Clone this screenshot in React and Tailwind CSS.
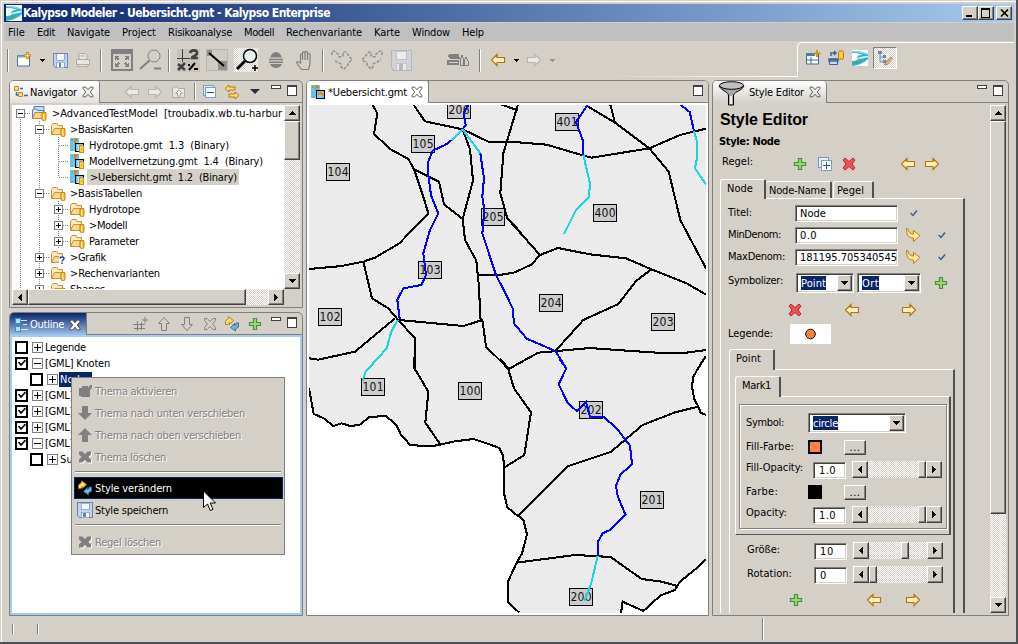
import React, { useLayoutEffect, useRef } from 'react';

const RAISED = 'bg-[#d4d0c8] border border-t-white border-l-white border-r-[#404040] border-b-[#404040] shadow-[inset_-1px_-1px_0_#808080] flex items-center justify-center shrink-0';
const SUNKEN = 'bg-white border border-t-[#808080] border-l-[#808080] border-r-white border-b-white shadow-[inset_1px_1px_0_#404040,inset_-1px_-1px_0_#d4d0c8] shrink-0';
const DITHER = 'bg-[repeating-conic-gradient(#ffffff_0_25%,#d4d0c8_0_50%)] bg-[length:2px_2px]';

/* Text run whose tracking is adjusted so that it takes exactly w pixels. */
function Fit({ w, className = '', children }) {
  const ref = useRef(null);
  useLayoutEffect(() => {
    const el = ref.current;
    el.style.letterSpacing = '0px';
    const natural = el.getBoundingClientRect().width;
    el.style.letterSpacing = (w - natural) / el.textContent.length + 'px';
  }, [w, children]);
  return <span ref={ref} className={'inline-block whitespace-pre shrink-0 leading-[15px] ' + className}>{children}</span>;
}

function I({ s = 16, className = '', crisp, children }) {
  return (
    <svg width={s} height={s} viewBox="0 0 16 16" className={'shrink-0 ' + className} shapeRendering={crisp ? 'crispEdges' : 'auto'} fill="none">
      {children}
    </svg>
  );
}

const Slot = ({ className, children }) => <div className={'flex h-full shrink-0 items-center justify-center ' + className}>{children}</div>;

/* ---------- icons ---------- */
const ArrowL = ({ fill = '#fff0b8', stroke = '#b8740c' }) => <I><path d="M1.500 8 7 2.500v3h7.500v5H7v3z" fill={fill} stroke={stroke} strokeWidth="1.200" /></I>;
const ArrowR = ({ fill = '#fff0b8', stroke = '#b8740c' }) => <I><path d="M14.500 8 9 2.500v3H1.500v5H9v3z" fill={fill} stroke={stroke} strokeWidth="1.200" /></I>;
const GL = () => <ArrowL fill="#eceae4" stroke="#b9b5ac" />;
const GR = () => <ArrowR fill="#eceae4" stroke="#b9b5ac" />;
const Plus = () => <I><path d="M6.500 2.500h3v4h4v3h-4v4h-3v-4h-4v-3h4z" fill="#a8d468" stroke="#3f9048" strokeWidth="1.200" /></I>;
const RedX = () => <I><path d="M2 4 4 2l4 3.500L12 2l2 2-3 4 3 4-2 2-4-3.500L4 14l-2-2 3-4z" fill="#ee5058" stroke="#c8202c" /></I>;
const Curve = () => <I><path d="M1.500 1.500c0 7 2 9.500 7 9.500v3.500l6.500-6-6.500-5v3.500c-3 0-5-1.500-5.500-5z" fill="#ffe690" stroke="#b8801c" /></I>;
const Check = () => <I s={8}><path d="M1 8l5 5 8-10" stroke="#3c5c98" strokeWidth="3" /></I>;
const Copy = () => (
  <I s={14} crisp><rect x="1" y="1" width="11" height="11" fill="#e6eef8" stroke="#6c8cbc" /><rect x="3.500" y="3.500" width="12" height="12" fill="#fff" stroke="#6c90c0" /><path d="M9.500 6v8M5.500 10h8" stroke="#28508c" strokeWidth="1.200" /></I>
);
const Swap = () => (
  <I><path d="M1.500 8.500V5l3-2.500V.800l5 3.700-4 3.800V6.500L4 8.500z" fill="#ffdc70" stroke="#b8780c" strokeWidth=".9" /><path d="M14.500 7v4l-3 2v2l-5-3.500 4-4v2l1.500-1V7z" fill="#78b4d4" stroke="#286c90" strokeWidth=".9" /></I>
);
const Floppy = ({ s, dark = '#6484b8', body = '#c4d4ec', face = '#f4f6f8' }) => (
  <I s={s} crisp><path d="M.5.5h15v15H2.500l-2-2z" fill={body} stroke={dark} /><path d="M4 1h8v6.500H4zM4 10h8v5.500H4z" fill={face} stroke={dark} strokeWidth=".6" /><path d="M6 11h3v4H6z" fill={dark} /></I>
);
const Tri = ({ c = '#000' }) => <svg width="7" height="4" viewBox="0 0 7 4" shapeRendering="crispEdges" className="shrink-0"><path d="M0 0h7L3.500 4z" fill={c} /></svg>;
const SmallTri = ({ c = '#000' }) => <svg width="5" height="3" viewBox="0 0 5 3" shapeRendering="crispEdges" className="shrink-0"><path d="M0 0h5L2.500 3z" fill={c} /></svg>;
const TriUp = () => <svg width="7" height="4" viewBox="0 0 7 4" shapeRendering="crispEdges"><path d="M0 4h7L3.500 0z" fill="#000" /></svg>;
const TriL = () => <svg width="4" height="7" viewBox="0 0 4 7" shapeRendering="crispEdges"><path d="M4 0v7L0 3.500z" fill="#000" /></svg>;
const TriR = () => <svg width="4" height="7" viewBox="0 0 4 7" shapeRendering="crispEdges"><path d="M0 0v7L4 3.500z" fill="#000" /></svg>;
const River = ({ s = 16 }) => (
  <I s={s}><path d="M0 0h16v16H0z" fill="#fff" /><path d="M0 1c5-.5 10 .5 16 3v2c-5 0-8 1-11 2.500C8 9 12 8.500 16 7v2c-3 3-8 6-16 7v-5c3 0 6-1 6-2C4 7.500 6 5 11 4.500 7 3 3 3 0 3z" fill="#28b4d8" /><path d="M1 14c3-3 7-4 10-4-2 2-6 4-10 4z" fill="#4ca864" /><path d="M0 1c5-.5 10 .5 16 3v1C10 3 5 2 0 2z" fill="#80dcf0" /></I>
);
const Cylinder = () => <g><rect x="11" y="7.500" width="4" height="8" rx="1.500" fill="#ffc838" stroke="#c07c10" /><path d="M12.500 9v5" stroke="#fff0b0" /></g>;
const Folder = ({ mark }) => (
  <I><path d="M1.500 13.500v-9l1.500-2h4l1 2h4.500v9z" fill="#fbe8b8" stroke="#c89038" /><path d="M1.500 13.500l3-6h10.500l-3 6z" fill="#fcd888" stroke="#c89038" />
    {mark ? <g><path d="M9 7h6v9H9z" fill="#fff" /><path d="M10 9.500c0-2 4-2 4 0 0 1.500-2 1.500-2 3m0 1v1.500" stroke="#1838b0" strokeWidth="1.500" /></g> : <Cylinder />}
  </I>
);
const ProjectIcon = () => <I><path d="M3 1.500h10v6H3z" fill="#c8dcf8" stroke="#5878c0" /><path d="M1.500 13.500V5l1-1h3l1 1.500h6v8z" fill="#e0e8f8" stroke="#5878c0" /><path d="M1.500 13.500l2.500-6h11l-2.500 6z" fill="#fcd480" stroke="#c08828" /><Cylinder /></I>;
const MapIcon = ({ cyl = true }) => (
  <I crisp><path d="M1 1h9v13H1z" fill="#5cc8fc" /><path d="M2 2h2v2H2zM5 1h3v1h1v2H7v2H5zM2 8h1v1H2zM2 12h2v1H2z" fill="#c88c28" /><rect x="6.500" y="6.500" width="8" height="8" fill="#78ccfc" stroke="#000" />{cyl ? <g><rect x="9" y="8" width="5" height="6" fill="#e8e0d8" /><rect x="10.500" y="8.500" width="4" height="6.500" fill="#ffc838" stroke="#d08c20" /></g> : <path d="M8 8h4v1h2v3h-2v-1H9z" fill="#e09020" />}</I>
);
const CloseX = ({ c = '#505050', fill = 'none' }) => (
  <I s={12}><path d="M1.500 1.500H5l3 3.500 3-3.500h3.500v2L11 8l3.500 4.500v2H11L8 11l-3 3.500H1.500v-2L5 8 1.500 3.500z" fill={fill} stroke={c} strokeWidth="1.200" /></I>
);
const MinBox = () => <div className="mt-[4px] h-[4px] w-[10px] shrink-0 self-start border border-[#404040] bg-white" />;
const MaxBox = () => <div className="mt-[4px] h-[11px] w-[10px] shrink-0 self-start border border-t-2 border-[#404040] bg-white" />;
const Sep = () => <div className="h-[23px] w-[2px] border-l border-[#808080] bg-white" />;
const DisX = () => <I><path d="M2 2.500h3.500L8 5l2.500-2.500H14v3L11.500 8l2.500 2.500v3h-3.500L8 11l-2.500 2.500H2v-3L4.500 8 2 5.500z" fill="#fff" transform="translate(1 1)" /><path d="M2 2.500h3.500L8 5l2.500-2.500H14v3L11.500 8l2.500 2.500v3h-3.500L8 11l-2.500 2.500H2v-3L4.500 8 2 5.500z" fill="#808080" /></I>;

/* ---------- title, menu and tool bars ---------- */
const MENU = [['File', 17], ['Edit', 18], ['Navigate', 43], ['Project', 34], ['Risikoanalyse', 64], ['Modell', 30], ['Rechenvariante', 76], ['Karte', 26], ['Window', 38], ['Help', 22]];

function TitleBar() {
  return (
    <div className="flex h-[18px] shrink-0 items-center bg-[linear-gradient(90deg,#0a246a,#a6caf0)] pl-[2px] pr-[2px]">
      <River />
      <Fit w={307} className="ml-[1px] text-[12px] font-bold text-white">Kalypso Modeler - Uebersicht.gmt - Kalypso Enterprise</Fit>
      <div className="ml-auto flex">
        <div className={RAISED + ' h-[14px] w-[16px]'}><svg width="10" height="9"><path d="M1 6h6v2H1z" fill="#000" /></svg></div>
        <div className={RAISED + ' h-[14px] w-[16px]'}><svg width="10" height="10" shapeRendering="crispEdges"><path d="M.5 1h8v8h-8z" fill="none" stroke="#000" /><path d="M0 0h9v2H0z" fill="#000" /></svg></div>
        <div className={RAISED + ' ml-[2px] h-[14px] w-[16px]'}><svg width="9" height="8"><path d="M1 .5l7 7M8 .5l-7 7" stroke="#000" strokeWidth="1.600" /></svg></div>
      </div>
    </div>
  );
}

function ToolBar() {
  return (
    <div className="flex h-[38px] shrink-0 items-center">
      <Slot className="w-[7px]"><Sep /></Slot>
      <Slot className="w-[25px]"><I><path d="M1.500 3.500h12v10.500h-12z" fill="#fdfdf4" stroke="#4878a8" /><path d="M1.500 3.500h8v2h-8z" fill="#78a4d8" /><path d="M11.500 0v7M8 3.500h7" stroke="#c89018" strokeWidth="2.600" /><path d="M11.500 1.500v4M9.500 3.500h4" stroke="#ffeca0" /></I></Slot>
      <Slot className="w-[13px]"><SmallTri /></Slot>
      <Slot className="w-[23px]"><Floppy s={15} /></Slot>
      <Slot className="w-[22px]"><I><path d="M4 7V1.500h6l2 2V7M1.500 7.500h13v5h-13zM3 12.500h10v2H3zM5.500 4h4" fill="#e8e6e0" stroke="#b0aca4" /></I></Slot>
      <Slot className="w-[13px]"><Sep /></Slot>
      <Slot className="w-[29px]">
        <svg width="22" height="22" shapeRendering="crispEdges"><path d="M0 0h22v22H0z" fill="#808080" /><path d="M2 5h18v15H2z" fill="#d4d0c8" /><path d="M4 7h5L4 11zM18 7h-5l5 4zM4 18h5l-5-4zM18 18h-5l5-4z" fill="#808080" /><path d="M6 9l2 2M16 9l-2 2M6 16l2-2M16 16l-2-2" stroke="#808080" strokeWidth="1.500" /></svg>
      </Slot>
      <Slot className="w-[28px]"><svg width="22" height="22"><circle cx="15" cy="7" r="6" fill="none" stroke="#808080" /><path d="M10.500 11.500 1 20M15 19.500h7" stroke="#808080" strokeWidth="2" /></svg></Slot>
      <Slot className="w-[10px]"><Sep /></Slot>
      <Slot className="w-[28px]">
        <svg width="23" height="23"><path d="M0 0h23v23H0z" fill="#c8c4bc" /><path d="M0 9.500h13M5.500 0v13" stroke="#404040" /><path d="M13 4c1-3.500 7-3.500 7 0s-5 3-5 5h6M1 15l7 6M8 14l-7 7" fill="none" stroke="#404040" strokeWidth="2.600" /><path d="M11 16h2M12 21l6-7M17 20h4" stroke="#000" strokeWidth="2" /></svg>
      </Slot>
      <Slot className="w-[30px]">
        <svg width="22" height="22"><path d="M.5.5h21v21H.5z" fill="#d0ccc4" stroke="#bcb8b0" /><path d="M12 12h9v9h-9zM1 1h5v6H1z" fill="#909090" /><path d="M3 4l15 13" stroke="#000" strokeWidth="2" /></svg>
      </Slot>
      <Slot className="w-[28px]">
        <div className={DITHER + ' h-[24px] w-[24px]'}>
          <svg width="24" height="24"><circle cx="16" cy="8" r="6.500" fill="#e8f0f0" stroke="#000" strokeWidth="1.500" /><path d="M11 13l-8 8" stroke="#000" strokeWidth="3" /><path d="M21 17v6M18 20h6" stroke="#000" strokeWidth="1.500" /></svg>
        </div>
      </Slot>
      <Slot className="w-[32px]"><svg width="16" height="20"><path d="M2 7.500c1-3 3-5.500 6-5.500s5 2.500 6 5.500zM1 8.800h14v1.500H1zM1 11.500h14V13H1zM2 14c1 2 3 4 6 4s5-2 6-4z" fill="#808080" /></svg></Slot>
      <Slot className="w-[26px]"><svg width="20" height="21"><path d="M6.500 19.500 1.500 13l1-1.500 3 1.500V4.500c1-1 2 0 2 1V10 2.500c1-1 2.500-1 2.500.5V10 2c1-1 2.500-.5 2.500 1V10 4c1-1 2.500-.5 2.500 1v9l-1.500 5.500z" fill="#d4d0c8" stroke="#808080" strokeWidth="1.200" /></svg></Slot>
      <Slot className="w-[10px]"><Sep /></Slot>
      <Slot className="w-[28px]"><svg width="22" height="22"><path d="M1 6V2h2l4 3 1 3 4-1V3h3l6 8-4 3v2l-4 4-3-2v-3l-6-3" fill="none" stroke="#808080" strokeWidth="1.200" strokeDasharray="3 1.500" /></svg></Slot>
      <Slot className="w-[31px]"><svg width="22" height="22"><path d="M21 6V2h-2l-4 3-1 3-4-1V3H8L1 11l5 3v2l4 4 2-2v-3l6-3 2-2" fill="none" stroke="#808080" strokeWidth="1.200" strokeDasharray="3 1.500" /></svg></Slot>
      <Slot className="w-[28px]"><Floppy s={21} dark="#b8b8bc" body="#d0d4d8" face="#ececea" /></Slot>
      <Slot className="ml-[29px] w-[28px]"><svg width="22" height="14" shapeRendering="crispEdges"><path d="M2 1h10v3h1v2H3L1 4zM0 7h12v5H0z" fill="#808080" /><path d="M2 9.500h9" stroke="#d4d0c8" /><path d="M13.500 12V6l1.500-4 1.500 4v6zM17.500 12V7L19 4l2 4v4z" fill="none" stroke="#808080" /></svg></Slot>
      <Slot className="w-[15px]"><Sep /></Slot>
      <Slot className="w-[22px]"><ArrowL /></Slot>
      <Slot className="w-[14px]"><SmallTri /></Slot>
      <Slot className="w-[22px]"><GR /></Slot>
      <Slot className="w-[14px]"><SmallTri c="#909090" /></Slot>
      <div className="ml-[37px] h-[36px] w-[201px] self-start bg-[linear-gradient(90deg,#d4d0c8,#ffffff)] bg-[length:100%_1px] bg-bottom bg-no-repeat" />
      <div className="mt-[1px] flex h-[35px] flex-1 items-center self-start rounded-tl-[5px] border-l border-t border-white pb-[4px] pl-[7px]">
        <Slot className="w-[16px]"><I><path d="M1.500 3.500h12v10.500h-12z" fill="#fcfcf4" stroke="#4068a0" /><path d="M1 3h9v3H1z" fill="#4878b8" /><path d="M6 7v7M1 10h12" stroke="#4068a0" /><path d="M12 0v7M8.500 3.500h7" stroke="#c89820" strokeWidth="2" /></I></Slot>
        <Slot className="ml-[5px] w-[20px]"><I><path d="M1.500 9.500h8v5h-8z" fill="#c8dcf4" stroke="#3860a0" /><path d="M1 9h9v2H1zM3 6V3h4M6 1l2 2-2 2" stroke="#3860a0" strokeWidth="1.400" /><rect x="10.500" y="1" width="5" height="8" rx="1.500" fill="#ffd040" stroke="#b87808" /></I></Slot>
        <Slot className="ml-[4px] w-[20px]"><River /></Slot>
        <div className={DITHER + ' ml-[3px] flex h-[22px] w-[24px] items-center justify-center border border-b-white border-r-white border-l-[#808080] border-t-[#808080]'}>
          <I><path d="M1 1h4v3H1zM6 5h3v3H6zM6 10h3v3H6z" fill="#6888c0" /><path d="M3 4v8h3M3 7h3" stroke="#6888c0" /><path d="M8 13l6-6 1.500 1.500-5 6-3 .5z" fill="#e0b070" stroke="#906030" strokeWidth=".6" /></I>
        </div>
      </div>
    </div>
  );
}

/* ---------- scroll bars ---------- */
function VScroll({ thumb, className }) {
  return (
    <div className={'flex w-[16px] shrink-0 flex-col ' + DITHER + ' ' + className}>
      <div className={RAISED + ' h-[16px] w-[16px]'}><TriUp /></div>
      <div className={RAISED + ' w-[16px] ' + thumb} />
      <div className={RAISED + ' mt-auto h-[16px] w-[16px]'}><Tri /></div>
    </div>
  );
}
function Slider({ offset = 'ml-auto' }) {
  return (
    <div className={'flex h-[17px] w-[90px] shrink-0 ' + DITHER}>
      <div className={RAISED + ' h-[17px] w-[16px]'}><TriL /></div>
      <div className="flex flex-1"><div className={RAISED + ' h-[17px] w-[8px] ' + offset} /></div>
      <div className={RAISED + ' h-[17px] w-[16px]'}><TriR /></div>
    </div>
  );
}

/* ---------- navigator ---------- */
/* One 19x16 cell of the tree guides: v through line, T branch, L last branch, + and - boxes. */
function Guide({ kind }) {
  const dash = { stroke: '#808080', strokeDasharray: '1 1' };
  const box = kind === '+' || kind === '-' || kind === 'r';
  return (
    <svg width="19" height="16" shapeRendering="crispEdges" className="shrink-0">
      {kind !== 'r' && <path d={kind === 'L' ? 'M9.500 0v8' : 'M9.500 0v16'} {...dash} />}
      {kind === 'r' && <path d="M9.500 8v8" {...dash} />}
      {kind !== 'v' && <path d="M10 8.500h9" {...dash} />}
      {box && <path d="M5.500 4.500h8v8h-8z" fill="#fff" stroke="#808080" />}
      {box && <path d={kind === '+' ? 'M7 8.500h5M9.500 6v5' : 'M7 8.500h5'} stroke="#000" />}
    </svg>
  );
}
const TREE = [
  ['r', 'p', '>AdvancedTestModel  [troubadix.wb.tu-harbur', 230],
  ['v-', 'f', '>BasisKarten', 63],
  ['vvT', 'm', 'Hydrotope.gmt  1.3  (Binary)', 140],
  ['vvT', 'm', 'Modellvernetzung.gmt  1.4  (Binary)', 174],
  ['vvL', 'm', '>Uebersicht.gmt  1.2  (Binary)', 147],
  ['v-', 'f', '>BasisTabellen', 72],
  ['vv+', 'f', 'Hydrotope', 51],
  ['vv+', 'f', '>Modell', 38],
  ['vv+', 'f', 'Parameter', 50],
  ['v+', 'q', '>Grafik', 36],
  ['v+', 'f', '>Rechenvarianten', 90],
  ['v+', 'f', 'Shapes', 35],
];

function Navigator() {
  return (
    <section className="flex h-[228px] flex-col rounded-t-[5px] border border-[#808080]">
      <div className="flex h-[22px] shrink-0">
        <div className="flex w-[90px] items-center rounded-tl-[4px] rounded-tr-[2px] border-r border-[#808080] bg-[linear-gradient(#fff,#e4e1dc)] pl-[3px]">
          <I><path d="M1.500 2.500h4v4h-4zM5.500 8.500h4v4h-4z" fill="#ffd880" stroke="#c08828" /><path d="M7 4.500h3M3.500 8v3H5M11 11.500h4" stroke="#3868a8" strokeWidth="1.500" /></I>
          <Fit w={47} className="ml-[1px]">Navigator</Fit>
          <span className="ml-[5px]"><CloseX /></span>
        </div>
        <div className="flex flex-1 items-center border-b border-[#808080] pl-[24px]">
          <GL /><span className="ml-[7px]"><GR /></span>
          <span className="ml-[8px]"><I><path d="M1.500 13.500V4l1-1h4l1 1.500h6v9z" fill="#e8e6e0" stroke="#b0aca4" /><path d="M8 6l3.500 3.500h-2V12h-3V9.500h-2z" fill="#fff" stroke="#a8a49c" /></I></span>
          <div className="ml-[7px] h-[17px] w-[2px] border-r border-white bg-[#808080]" />
          <span className="ml-[6px]"><I crisp><path d="M1.500 1.500h10v10h-10z" fill="#dce8f8" stroke="#78a0d0" /><path d="M3.500 3.500h10v10h-10z" fill="#fff" stroke="#78a0d0" /><path d="M5 8.500h7" stroke="#284c88" strokeWidth="1.500" /></I></span>
          <span className="ml-[6px]"><I><path d="M1 4.500 5 1v2h6v3H5v2zM15 11.500 11 8v2H5v3h6v2z" fill="#ffdc78" stroke="#b8780c" /></I></span>
          <span className="ml-[10px]"><svg width="10" height="5"><path d="M0 0h10L5 5z" fill="#302850" /></svg></span>
          <span className="ml-[11px] self-start"><MinBox /></span>
          <span className="ml-[6px] self-start"><MaxBox /></span>
        </div>
      </div>
      <div className="mx-[2px] mb-[2px] mt-[2px] flex flex-1 flex-col overflow-hidden">
        <div className="flex h-[184px] shrink-0">
          <div className="w-[272px] overflow-hidden bg-white">
            {TREE.map(([guides, icon, text, w], i) => (
              <div key={i} className="-ml-px flex h-[16px] items-center">
                {guides.split('').map((g, j) => <Guide key={j} kind={g} />)}
                <span className="ml-[1px] shrink-0">{icon === 'p' ? <ProjectIcon /> : icon === 'm' ? <MapIcon /> : <Folder mark={icon === 'q'} />}</span>
                <div className={(i === 4 ? 'bg-[#d4d0c8] pr-[2px] ml-[2px] pl-[3px]' : i === 0 ? 'ml-[5px]' : 'ml-[4px]') + ' flex h-[16px] shrink-0 items-center'}><Fit w={w}>{text}</Fit></div>
              </div>
            ))}
          </div>
          <VScroll className="h-[184px]" thumb="h-[39px]" />
        </div>
        <div className="flex h-[16px] shrink-0">
          <div className={'flex h-[16px] w-[272px] ' + DITHER}>
            <div className={RAISED + ' h-[16px] w-[16px]'}><TriL /></div>
            <div className={RAISED + ' h-[16px] w-[218px]'} />
            <div className={RAISED + ' ml-auto h-[16px] w-[16px]'}><TriR /></div>
          </div>
        </div>
      </div>
    </section>
  );
}

/* ---------- outline ---------- */
const OUTLINE = [
  [0, false, '+', 'Legende', 41], [0, true, '-', '[GML] Knoten', 65], [1, false, '+', 'Node', 26],
  [0, true, '+', '[GML]', 28], [0, true, '+', '[GML]', 28], [0, true, '+', '[GML]', 28], [0, true, '-', '[GML]', 28], [1, false, '+', 'Su', 13],
];

function Outline() {
  return (
    <section className="mt-[4px] flex h-[304px] flex-col rounded-t-[5px] border border-[#808080]">
      <div className="flex h-[22px] shrink-0">
        <div className="-mb-px flex w-[76px] items-center rounded-tl-[4px] bg-[linear-gradient(#0a246a,#a6caf0)] pl-[4px] text-white">
          <I crisp><path d="M1 1h5v5H1zM1 9h5v5H1z" fill="#a8e0f8" stroke="#3890d0" /><path d="M7 3.500h6M9 7.500h4M7 12.500h7" stroke="#d0e8fc" /></I>
          <Fit w={34}>Outline</Fit>
          <span className="ml-[5px]"><CloseX c="#404040" fill="#fff" /></span>
        </div>
        <div className="flex flex-1 items-center border-b border-l border-[#808080] pl-[46px]">
          <I><path d="M4.500 5v10M8.500 6v8M0 8.500h12M1 12.500h11M12 1v6M9 4h6" stroke="#808080" strokeWidth="1.100" /></I>
          <span className="ml-[7px]"><I><path d="M8 1.500l5.500 6h-3v7h-5v-7h-3z" stroke="#808080" /></I></span>
          <span className="ml-[7px]"><I><path d="M8 14.500l5.500-6h-3v-7h-5v7h-3z" stroke="#808080" /></I></span>
          <span className="ml-[7px]"><I><path d="M2.500 2.500H5l3 3 3-3h2.500v2L10.500 8l3 3.500v2H11l-3-3-3 3H2.500v-2l3-3.500-3-3.500z" stroke="#808080" /></I></span>
          <span className="ml-[6px]"><Swap /></span>
          <span className="ml-[7px]"><Plus /></span>
          <span className="ml-[8px] self-start"><MinBox /></span>
          <span className="ml-[6px] self-start"><MaxBox /></span>
        </div>
      </div>
      <div className="flex-1 overflow-hidden border-2 border-[#a6caf0] bg-white pl-[3px] pt-[2px]">
        {OUTLINE.map(([depth, on, sign, text, w], i) => (
          <div key={i} className={'flex h-[16px] items-center ' + (depth ? 'pl-[15px]' : '')}>
            <div className="flex h-[13px] w-[13px] shrink-0 items-center justify-center border-2 border-black">{on && <svg width="8" height="8"><path d="M.5 3l2.500 3L7.500 1" fill="none" stroke="#000" strokeWidth="1.800" /></svg>}</div>
            <svg width="11" height="11" shapeRendering="crispEdges" className="ml-[4px] shrink-0"><path d="M.5.5h10v10H.5z" fill="#fff" stroke="#808080" /><path d={sign === '+' ? 'M2 5.500h7M5.500 2v7' : 'M2 5.500h7'} stroke="#000" /></svg>
            <div className={'ml-[1px] flex h-[15px] items-center pl-[1px] ' + (i === 2 ? 'w-[33px] bg-[#0a246a] text-white' : '')}><Fit w={w}>{text}</Fit></div>
          </div>
        ))}
      </div>
    </section>
  );
}

/* ---------- context menu ---------- */
const DIS = 'text-[#808080] [text-shadow:1px_1px_0_#fff]';
function Item({ icon, w, children, className = DIS }) {
  return <div className={'flex h-[22px] shrink-0 items-center ' + className}><span className="ml-[3px] mr-[2px] shrink-0">{icon}</span><Fit w={w}>{children}</Fit></div>;
}
const Rule = ({ className }) => <div className={'mx-[1px] h-[2px] shrink-0 border-b border-white bg-[#808080] ' + className} />;

function ContextMenu() {
  return (
    <div className="absolute left-[71px] top-[377px] flex h-[178px] w-[214px] flex-col border border-[#808080] bg-[#d4d0c8] px-[2px] pt-[2px]">
      <Item w={82} icon={<I><path d="M2 5h3V3h6v2l2-3h2v3l-2 2v7H4v-1H2z" fill="#808080" /></I>}>Thema aktivieren</Item>
      <Item w={150} icon={<I><path d="M5 1h6v7h4l-7 7-7-7h4z" fill="#808080" /></I>}>Thema nach unten verschieben</Item>
      <Item w={146} icon={<I><path d="M5 15h6V8h4L8 1 1 8h4z" fill="#808080" /></I>}>Thema nach oben verschieben</Item>
      <Item w={71} icon={<DisX />}>Thema löschen</Item>
      <Rule className="mt-[3px]" />
      <Item w={77} className="-mr-px mt-[4px] border border-[#0a246a] bg-black text-white [&>span:first-child]:ml-[2px]!" icon={<Swap />}>Style verändern</Item>
      <Item w={73} className="text-black" icon={<Floppy s={16} />}>Style speichern</Item>
      <Rule className="mt-[3px]" />
      <Item w={66} className={'mt-[5px] ' + DIS} icon={<DisX />}>Regel löschen</Item>
    </div>
  );
}

/* ---------- map ---------- */
/* Lines are kept in third-pixel units, one group for each quadrant of the map. */
const QUADS = [
  { t: 'translate(300 100) scale(.33333)',
    b: ['215,10 232,40 222,102 272,148 325,177 342,208 417,245 432,313 488,357', '342,208 370,290 385,340 298,430 225,473 190,485 125,498 27,507', '190,485 216,595 265,625 292,657', '338,10 375,64 488,88 565,125 660,125', '488,88 510,148 519,242 488,357 495,420 529,482 537,560 541,655 548,665 558,740 626,807 665,785', '655,10 610,160 601,280 622,355 665,400', '537,525 600,525 645,517 660,510', '298,660 490,678 548,660', '285,655 165,755 55,779 27,775', '292,657 345,715 344,812', '605,14 655,32'],
    r: ['505,14 491,40 497,75 488,88', '455,120 437,134 398,152 385,185 385,225 393,285 415,340 390,390 370,460 378,525 364,555 310,565 292,600 299,657', '541,160 552,235 547,290 553,330 547,400 588,525 638,625 642,670 660,692'],
    c: ['488,88 455,120', '488,88 541,160', '293,660 274,695 260,745 200,812'] },
  { t: 'translate(500 100) scale(.33333)',
    b: ['5,14 53,30', '0,125 55,127 140,134 248,166 275,173 448,145 540,105 618,86', '258,16 345,68 448,145 506,215 541,360 618,505', '331,14 345,68', '22,355 120,465 95,493 45,517 0,525', '120,465 173,444 270,463 378,475 454,508 560,550 618,584', '454,508 408,543 355,612 250,660 166,753', '0,775 26,807 115,758 270,744 350,750 470,758 560,758 618,750', '618,768 590,812'],
    r: ['262,16 228,66 248,120 249,165', '541,14 569,36 582,93', '0,547 38,625 42,670 80,716 166,753 199,805'],
    c: ['250,165 270,250 267,290 228,330 192,402', '582,93 591,125 590,180 585,205 618,253'] },
  { t: 'translate(300 360) scale(.33333)',
    b: ['27,85 41,162 70,174 100,198 125,190 150,198 178,195 208,171 258,168 290,196 303,225 330,254 365,258 405,257 465,244 520,237 560,250 598,264 608,285 612,310 612,400 622,442 656,470', '342,-10 342,22 385,95 376,188 420,252'],
    r: [], c: ['228,0 197,35 188,62'] },
  { t: 'translate(500 360) scale(.33333)',
    b: ['0,0 25,28 42,85 93,157 73,285 12,323', '25,28 78,-2', '56,467 205,318 332,276 428,195 525,157 595,140', '56,467 70,480 81,523 66,580 50,608 24,665 24,727 58,758', '50,608 225,585 332,591 425,657 485,665 532,678', '618,-12 600,15 580,50 576,80 583,118 595,140 602,158 618,165', '618,598 598,618 540,665 525,690 482,706 430,753 368,725 363,758'],
    r: ['180,0 199,25 176,73 203,128 230,153 258,126 270,171 311,171 350,205 390,257 396,313 362,343 348,378 353,408 376,463 330,510 308,520 294,545 293,588'],
    c: ['293,588 275,665 254,722'] },
];
const LABELS = [['206', 447, 101], ['105', 411, 135], ['104', 326, 163], ['205', 481, 208], ['103', 418, 261], ['102', 318, 308], ['401', 555, 113], ['400', 593, 204], ['204', 539, 294], ['203', 651, 313], ['101', 361, 378], ['100', 458, 382], ['202', 579, 401], ['201', 640, 491], ['200', 569, 588]];

function RiverMap() {
  return (
    <svg width="397" height="508" viewBox="309 105 397 508" className="block">
      <path d="M309 105h397v508H309z" fill="#ebebeb" />
      <g fill="#fff">
        <polygon transform={QUADS[2].t} points="27,85 41,162 70,174 100,198 125,190 150,198 178,195 208,171 258,168 290,196 303,225 330,254 365,258 405,257 465,244 520,237 560,250 598,264 608,285 612,310 612,400 622,442 656,467 670,480 681,523 666,580 650,608 624,665 624,727 658,758 658,762 27,762" />
        <polygon transform={QUADS[3].t} points="618,-12 600,15 580,50 576,80 583,118 595,140 602,158 618,165" />
        <polygon transform={QUADS[3].t} points="618,598 598,618 540,665 525,690 482,706 430,753 368,725 363,762 618,762" />
      </g>
      <g shapeRendering="crispEdges" fill="none" strokeWidth="6.200" stroke="#000">
        {QUADS.map((q, i) => <g key={i} transform={q.t}>{q.b.map((p) => <polyline key={p} points={p} />)}</g>)}
      </g>
      {LABELS.map(([t, x, y]) => (
        <g key={t + y}>
          <rect x={x + 0.5} y={y + 0.5} width="23" height="17" fill="#ccc" stroke="#000" />
          <text x={x + 1.5} y={y + 13} textLength="21" fontSize="12" fill="#111">{t}</text>
        </g>
      ))}
      <g shapeRendering="crispEdges" fill="none" strokeWidth="6.200">
        {QUADS.map((q, i) => (
          <g key={i} transform={q.t}>
            {q.r.map((p) => <polyline key={p} points={p} stroke="#0000ff" />)}
            {q.c.map((p) => <polyline key={p} points={p} stroke="#1cd4e0" />)}
          </g>
        ))}
      </g>
    </svg>
  );
}

function Editor() {
  return (
    <section className="ml-[3px] flex w-[403px] shrink-0 flex-col rounded-t-[5px] border border-[#808080] bg-white">
      <div className="flex h-[22px] shrink-0 rounded-t-[4px] bg-[#d4d0c8]">
        <div className="flex w-[121px] items-center rounded-t-[4px] bg-white pl-[3px]">
          <MapIcon cyl={false} /><Fit w={79} className="ml-[2px]">*Uebersicht.gmt</Fit><span className="ml-[4px]"><CloseX /></span>
        </div>
        <div className="flex flex-1 justify-end border-b border-l border-[#808080] pr-[5px]"><MaxBox /></div>
      </div>
      <div className="pl-[2px] pt-[2px]"><RiverMap /></div>
    </section>
  );
}

/* ---------- style editor ---------- */
const Label = ({ w, slot, children }) => <div className={'shrink-0 ' + slot}><Fit w={w}>{children}</Fit></div>;
const Field = ({ className, w, children }) => <div className={SUNKEN + ' flex items-center overflow-hidden ' + className}><Fit w={w}>{children}</Fit></div>;
const Combo = ({ className, w, children }) => (
  <div className={SUNKEN + ' flex h-[20px] items-center p-[1px] ' + className}>
    <span className="ml-[3px] flex h-[14px] items-center bg-[#0a246a] text-white"><Fit w={w}>{children}</Fit></span>
    <div className={RAISED + ' ml-auto h-[16px] w-[15px]'}><Tri /></div>
  </div>
);
const Dots = () => <div className={RAISED + ' ml-[22px] h-[15px] w-[22px]'}><Fit w={11}>...</Fit></div>;
const TabHead = ({ className, children }) => <div className={'relative flex rounded-tl-[3px] rounded-tr-[2px] border-l border-t border-r-2 border-l-white border-t-white border-r-[#505050] bg-[#d4d0c8] ' + className}>{children}</div>;

function StyleEditor() {
  return (
    <section className="ml-[3px] flex w-[297px] shrink-0 flex-col rounded-t-[5px] border border-[#808080]">
      <div className="flex h-[22px] shrink-0">
        <div className="flex w-[114px] items-center rounded-t-[4px] border-r border-[#808080] bg-[linear-gradient(#fff,#d4d0c8)] pl-[5px]">
          <svg width="27" height="25" className="-mb-[3px] shrink-0"><path d="M1 5c3 5 8 5 9.500 9v10h5V14c2-4 8-4 10.500-9z" fill="#a8a8a8" stroke="#000" /><ellipse cx="13.500" cy="4.500" rx="12" ry="3.800" fill="#c0c0c0" stroke="#000" /><path d="M13 15v8" stroke="#f0f0f0" strokeWidth="2" /></svg>
          <Fit w={55} className="ml-[4px]">Style Editor</Fit><span className="ml-[5px]"><CloseX /></span>
        </div>
        <div className="flex flex-1 justify-end border-b border-[#808080] pr-[5px]"><MinBox /><span className="w-[6px]" /><MaxBox /></div>
      </div>
      <div className="flex h-[510px]">
        <div className="flex w-[277px] flex-col pl-[7px]">
          <div className="flex h-[32px] items-center"><Fit w={88} className="font-['Liberation_Sans',sans-serif] text-[16px] font-bold">Style Editor</Fit></div>
          <div className="flex h-[13px] items-center"><Fit w={61} className="-ml-px font-bold">Style: Node</Fit></div>
          <div className="flex h-[31px] items-center pl-[2px]">
            <Label w={31} slot="w-[70px] -mt-[3px]">Regel:</Label>
            <Plus /><span className="ml-[10px]"><Copy /></span><span className="ml-[9px]"><RedX /></span><span className="ml-[43px]"><ArrowL /></span><span className="ml-[8px]"><ArrowR /></span>
          </div>
          <div className="flex h-[19px] items-end">
            <TabHead className="z-10 -mb-px h-[20px] w-[46px] pl-[6px] pt-[1px]"><Fit w={26}>Node</Fit></TabHead>
            <TabHead className="h-[17px] w-[66px] border-l-0 pl-[3px] pt-px"><Fit w={57}>Node-Name</Fit></TabHead>
            <TabHead className="ml-[1px] h-[17px] w-[41px] pl-[3px] pt-px"><Fit w={27}>Pegel</Fit></TabHead>
          </div>
          <div className="flex w-[245px] flex-1 flex-col border-l border-r-2 border-t border-l-white border-r-[#505050] border-t-white pl-[7px] pt-[6px]">
            <div className="flex h-[22px] items-start"><Label w={24} slot="w-[67px]">Titel:</Label><Field w={26} className="h-[17px] w-[103px] pl-[4px]">Node</Field><span className="ml-[12px] mt-[4px]"><Check /></span></div>
            <div className="flex h-[22px] items-start"><Label w={53} slot="w-[67px]">MinDenom:</Label><Field w={17} className="h-[17px] w-[103px] pl-[4px]">0.0</Field><span className="ml-[7px]"><Curve /></span><span className="ml-[17px] mt-[4px]"><Check /></span></div>
            <div className="flex h-[22px] items-start"><Label w={57} slot="w-[67px]">MaxDenom:</Label><Field w={97} className="h-[17px] w-[103px] pl-[4px]">181195.705340545</Field><span className="ml-[7px]"><Curve /></span><span className="ml-[17px] mt-[4px]"><Check /></span></div>
            <div className="mt-[2px] flex h-[20px] items-start"><Label w={55} slot="w-[68px]">Symbolizer:</Label><Combo w={25} className="w-[58px]">Point</Combo><Combo w={17} className="ml-[3px] w-[64px]">Ort</Combo><span className="ml-[12px] mt-[2px]"><Plus /></span></div>
            <div className="mt-[9px] flex h-[16px] pl-[59px]"><RedX /><span className="ml-[41px]"><ArrowL /></span><span className="ml-[41px]"><ArrowR /></span></div>
            <div className="mt-[6px] flex h-[20px] items-center"><Label w={45} slot="w-[62px]">Legende:</Label><div className="flex h-[20px] w-[41px] items-center justify-center bg-white"><svg width="12" height="12"><circle cx="5.500" cy="6" r="4.800" fill="#ff8040" stroke="#000" /></svg></div></div>
            <TabHead className="z-10 -mb-px ml-[1px] mt-[5px] h-[21px] w-[46px] shrink-0 pl-[6px] pt-px"><Fit w={25}>Point</Fit></TabHead>
            <div className="ml-[1px] flex w-[226px] flex-1 flex-col border-l border-r-2 border-t border-l-white border-r-[#505050] border-t-white pl-[5px] pt-[6px]">
              <TabHead className="z-10 -mb-px h-[21px] w-[46px] shrink-0 pl-[6px] pt-px"><Fit w={29}>Mark1</Fit></TabHead>
              <div className="h-[139px] w-[216px] shrink-0 border border-r-2 border-b-[#505050] border-l-white border-r-[#505050] border-t-white pl-[3px] pt-[7px]">
                <div className="h-[125px] w-[208px] border border-[#808080] pl-[6px] pt-[8px] shadow-[inset_1px_1px_0_#fff,1px_1px_0_#fff]">
                  <div className="flex h-[26px] items-start"><Label w={38} slot="w-[62px] mt-[2px]">Symbol:</Label><Combo w={25} className="w-[98px]">circle</Combo></div>
                  <div className="flex h-[22px] items-start pt-[1px]"><Label w={48} slot="w-[62px] -mt-[1px]">Fill-Farbe:</Label><div className="h-[14px] w-[14px] border-2 border-black bg-[#ff8040]" /><Dots /></div>
                  <div className="flex h-[23px] items-start"><Label w={57} slot="w-[67px] -mt-[1px]">Fill-Opacity:</Label><Field w={17} className="mt-[1px] h-[17px] w-[33px] pl-[5px]">1.0</Field><span className="ml-[6px]"><Slider /></span></div>
                  <div className="flex h-[22px] items-start pt-[1px]"><Label w={32} slot="w-[62px] -mt-[1px]">Farbe:</Label><div className="h-[14px] w-[14px] bg-black" /><Dots /></div>
                  <div className="flex h-[20px] items-start"><Label w={41} slot="w-[67px] -mt-[1px]">Opacity:</Label><Field w={17} className="mt-[1px] h-[17px] w-[33px] pl-[5px]">1.0</Field><span className="ml-[6px]"><Slider /></span></div>
                </div>
              </div>
              <div className="mt-[7px] flex h-[24px] items-start pl-[12px]"><Label w={33} slot="w-[67px]">Größe:</Label><Field w={14} className="mt-[1px] h-[17px] w-[33px] pl-[5px]">10</Field><span className="ml-[6px]"><Slider offset="ml-[32px]" /></span></div>
              <div className="flex h-[24px] items-start pl-[12px]"><Label w={45} slot="w-[67px]">Rotation:</Label><Field w={7} className="mt-[1px] h-[17px] w-[33px] pl-[5px]">0</Field><span className="ml-[6px]"><Slider offset="ml-0" /></span></div>
              <div className="mt-[2px] flex h-[16px] pl-[53px]"><Plus /><span className="ml-[62px]"><ArrowL /></span><span className="ml-[23px]"><ArrowR /></span></div>
            </div>
          </div>
        </div>
        <VScroll className="mt-[2px] h-[508px]" thumb="h-[393px]" />
      </div>
    </section>
  );
}

export default function App() {
  return (
    <div className="relative flex h-[644px] w-[1018px] flex-col overflow-hidden border-b-2 border-r-2 border-b-[#505050] border-r-[#505050] bg-[#d4d0c8] font-['DejaVu_Sans_Condensed','DejaVu_Sans',sans-serif] text-[11px] text-black shadow-[inset_1px_1px_0_#d4d0c8,inset_2px_2px_0_#fff]">
      <div className="flex flex-1 flex-col pl-[4px] pr-[2px] pt-[4px]">
        <TitleBar />
        <div className="mt-px flex h-[18px] shrink-0 items-center gap-3 bg-[#c0c0c0] pl-[5px]">
          {MENU.map(([m, w]) => <Fit key={m} w={w} className="-ml-px mr-px">{m}</Fit>)}
        </div>
        <ToolBar />
        <div className="mt-px flex h-[536px] shrink-0 pl-[5px]">
          <div className="w-[294px] shrink-0"><Navigator /><Outline /></div>
          <Editor />
          <StyleEditor />
        </div>
        <div className="flex flex-1 items-center">
          <div className="ml-[8px] h-[10px] w-[2px] border-r border-white bg-[#808080]" />
          <div className="ml-[23px] h-[10px] w-[2px] border-r border-white bg-[#808080]" />
          <div className="ml-[723px] h-[22px] w-[2px] border-r border-white bg-[#808080]" />
        </div>
      </div>
      <ContextMenu />
      <svg width="14" height="22" className="absolute left-[203px] top-[490px]"><path d="M.5 1v16.500l4-3.500 2.800 6.500 2.700-1.200-2.800-6.300h5.300z" fill="#fff" stroke="#000" /></svg>
    </div>
  );
}
